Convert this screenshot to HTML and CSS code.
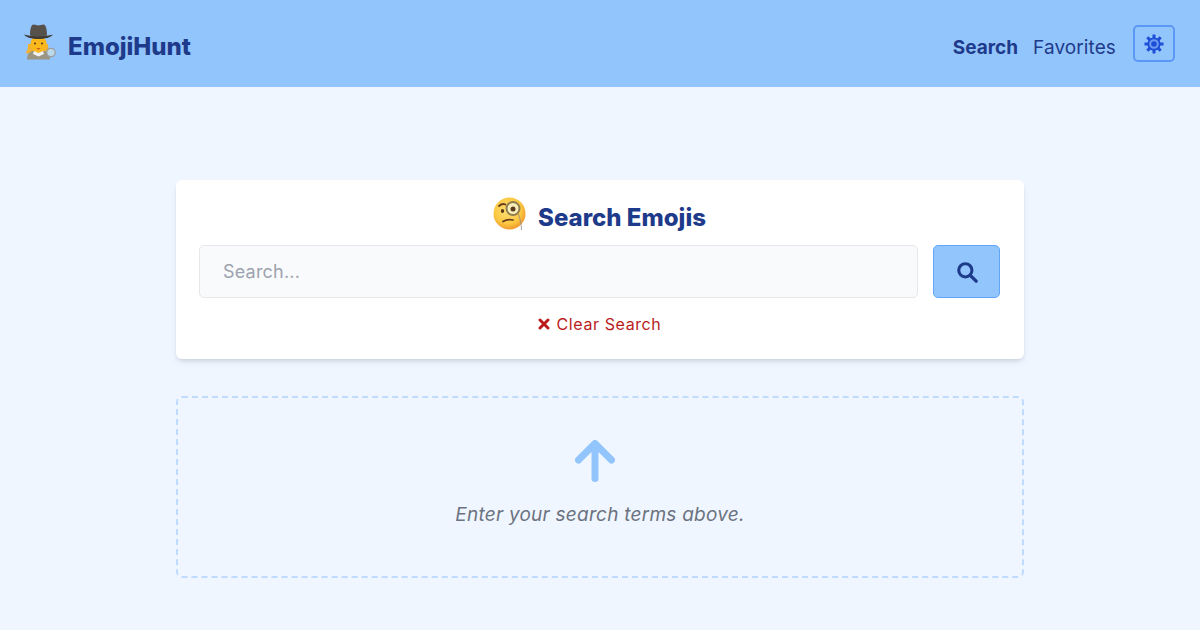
FILE: index.html
```html
<!DOCTYPE html>
<html lang="en">
<head>
    <meta charset="UTF-8">
    <title>EmojiHunt</title>
    <link rel="stylesheet" href="styles.css">
</head>
<body>
    <header class="navbar">
        <a class="brand">
            <svg class="brand-icon" viewBox="0 0 32 36">
                <path d="M4 20c0 5-1 8-3 9 3 1 6 0 8-1h10c2 1 5 2 8 1-2-1-3-4-3-9z" fill="#f2b233"/>
                <path d="M3 35.500c0-6 3-9.500 11.500-9.500S26 29.500 26 35.500z" fill="#9c9582"/>
                <ellipse cx="14.500" cy="20" rx="8" ry="9" fill="#fbb81c"/>
                <path d="M10 27l4.500 2 4.500-2 1 3-5.500 2.500L9 30z" fill="#f2f2f2"/>
                <path d="M12.500 24h4l-2 1.800z" fill="#c0561f"/>
                <circle cx="11" cy="19.500" r="1" fill="#4a3320"/>
                <circle cx="18" cy="19.500" r="1" fill="#4a3320"/>
                <path d="M0 10.500c4 1 8 1.500 14.500 1.500S25 11.500 29 10.500c-2 3-8 4.500-14.500 4.500S2 13.500 0 10.500z" fill="#3f3a35"/>
                <path d="M6 11.500c0-6 1-11 3.500-11 2 0 3.500 1 5 1s3-1 5-1C22 .5 23 5.500 23 11.500c-4 1.300-13 1.300-17 0z" fill="#57514b"/>
                <circle cx="27" cy="28.500" r="4.200" fill="#bcd9ea" stroke="#9a9c9e" stroke-width="1.200"/>
            </svg>
            <span class="text-nudge">EmojiHunt</span>
        </a>
        <nav class="nav-links">
            <a class="nav-link active">Search</a>
            <a class="nav-link">Favorites</a>
            <button class="theme-btn" type="button">
                <svg viewBox="0 0 20 20" width="20" height="20">
                    <g stroke="#1d4ed8" stroke-width="3">
                        <path d="M10 .5v4M10 15.500v4M.5 10h4M15.500 10h4M3.300 3.300l2.800 2.800M13.900 13.900l2.800 2.800M16.700 3.300l-2.800 2.800M6.100 13.900l-2.800 2.800"/>
                    </g>
                    <circle cx="10" cy="10" r="5.700" fill="#6d9cf0" stroke="#1d4ed8" stroke-width="1.800"/>
                    <circle cx="10" cy="10" r="2.800" fill="#1d4ed8"/>
                </svg>
            </button>
        </nav>
    </header>

    <main class="content">
        <section class="search-card">
            <h2 class="search-title">
                <svg class="title-icon" viewBox="0 0 34 34">
                    <defs>
                        <radialGradient id="faceFill" cx="45%" cy="40%" r="60%">
                            <stop offset="0" stop-color="#fde17a"/>
                            <stop offset=".7" stop-color="#fbc840"/>
                            <stop offset="1" stop-color="#f29a2e"/>
                        </radialGradient>
                    </defs>
                    <circle cx="16.500" cy="16.500" r="16" fill="url(#faceFill)"/>
                    <path d="M6 9c2-2 4-2.500 6.500-1.500" fill="none" stroke="#6b3f1d" stroke-width="1.800" stroke-linecap="round"/>
                    <ellipse cx="9.500" cy="14" rx="1.700" ry="2" fill="#5b3a1b"/>
                    <circle cx="20" cy="11.500" r="6.500" fill="#f8eebb" stroke="#8f7c4c" stroke-width="2"/>
                    <circle cx="20" cy="12" r="2.500" fill="#5b3a1b"/>
                    <path d="M10 24.500c3-2 6-2.500 10-1.500" fill="none" stroke="#6b3f1d" stroke-width="1.800" stroke-linecap="round"/>
                    <path d="M25.500 17c1.500 5 3 10 3 16" fill="none" stroke="#8a8a8a" stroke-width=".8"/>
                </svg>
                <span class="text-nudge">Search Emojis</span>
            </h2>
            <form class="search-form">
                <input class="search-input" type="text" placeholder="Search...">
                <button class="search-btn" type="button">
                    <svg viewBox="0 0 20 20" width="22" height="22">
                        <circle cx="8.500" cy="8.500" r="6" fill="none" stroke="#1e3a8a" stroke-width="2.800"/>
                        <path d="M13 13l5.300 5.300" stroke="#1e3a8a" stroke-width="3" stroke-linecap="round"/>
                    </svg>
                </button>
            </form>
            <a class="clear-link">
                <svg viewBox="0 0 12 12" width="12" height="12">
                    <path d="M2 2l8 8M10 2l-8 8" stroke="#b91c1c" stroke-width="3" stroke-linecap="round"/>
                </svg>
                <span>Clear Search</span>
            </a>
        </section>

        <section class="hint-box">
            <svg class="hint-arrow" viewBox="0 0 40 42" width="40" height="42">
                <path d="M3.500 20L20 3.500 36.500 20M20 4v34.500" fill="none" stroke="#93c5fd" stroke-width="7" stroke-linecap="round" stroke-linejoin="round"/>
            </svg>
            <p class="hint-text">Enter your search terms above.</p>
        </section>
    </main>
</body>
</html>
```
FILE: styles.css
```css
* {
    box-sizing: border-box;
}
body {
    margin: 0;
    height: 630px;
    overflow: hidden;
    font-family: "Inter", "Liberation Sans", sans-serif;
    background-color: #eff6ff;
    color: #1e3a8a;
}
.navbar {
    height: 87px;
    padding: 0 25px 0 24px;
    display: flex;
    align-items: center;
    justify-content: space-between;
    background-color: #93c5fd;
}
.brand {
    display: flex;
    align-items: center;
    gap: 12px;
    font-size: 24px;
    font-weight: 800;
}
.brand-icon {
    width: 32px;
    height: 36px;
    margin-top: -3px;
}
.text-nudge {
    padding-top: 6px;
}
.search-title .text-nudge {
    padding-top: 4px;
}
.nav-links {
    display: flex;
    align-items: center;
    font-size: 19px;
}
.nav-link {
    margin-right: 15px;
    padding-top: 7px;
    letter-spacing: 0.1px;
}
.nav-link.active {
    font-weight: 700;
    letter-spacing: 0;
}
.theme-btn {
    width: 42px;
    height: 37px;
    margin-left: 2px;
    padding: 0;
    display: flex;
    align-items: center;
    justify-content: center;
    background: none;
    border: 2px solid #5b97f5;
    border-radius: 5px;
}
.content {
    width: 848px;
    margin: 0 auto;
    padding-top: 93px;
}
.search-card {
    height: 179px;
    padding: 16px 24px 0 23px;
    background-color: white;
    border-radius: 6px;
    box-shadow: 0 4px 6px -1px rgba(0,0,0,0.1), 0 2px 4px -2px rgba(0,0,0,0.1);
}
.search-title {
    margin: 0 0 11px;
    height: 38px;
    display: flex;
    align-items: center;
    justify-content: center;
    gap: 11px;
    font-size: 24px;
    font-weight: 800;
}
.title-icon {
    width: 34px;
    height: 34px;
    margin-top: -2px;
}
.search-form {
    display: flex;
    gap: 15px;
}
.search-input {
    flex: 1;
    height: 53px;
    padding: 0 23px;
    font-family: inherit;
    font-size: 18px;
    letter-spacing: 0.2px;
    background-color: #f9fafb;
    border: 1px solid #e5e7eb;
    border-radius: 5px;
}
.search-input::placeholder {
    color: #9ca3af;
}
.search-btn {
    width: 67px;
    height: 53px;
    padding: 0;
    display: flex;
    align-items: center;
    justify-content: center;
    background-color: #93c5fd;
    border: 1px solid #60a5fa;
    border-radius: 5px;
}
.clear-link {
    margin-top: 16px;
    display: flex;
    align-items: center;
    justify-content: center;
    gap: 7px;
    font-size: 16px;
    letter-spacing: 0.6px;
    color: #b91c1c;
}
.hint-box {
    height: 182px;
    margin-top: 37px;
    padding-top: 42px;
    display: flex;
    flex-direction: column;
    align-items: center;
    border: 2px dashed #bfdbfe;
    border-radius: 6px;
}
.hint-arrow {
    margin-right: 10px;
}
.hint-text {
    margin: 21px 0 0;
    font-size: 19px;
    letter-spacing: 0.25px;
    font-style: italic;
    color: #6b7280;
}
```
